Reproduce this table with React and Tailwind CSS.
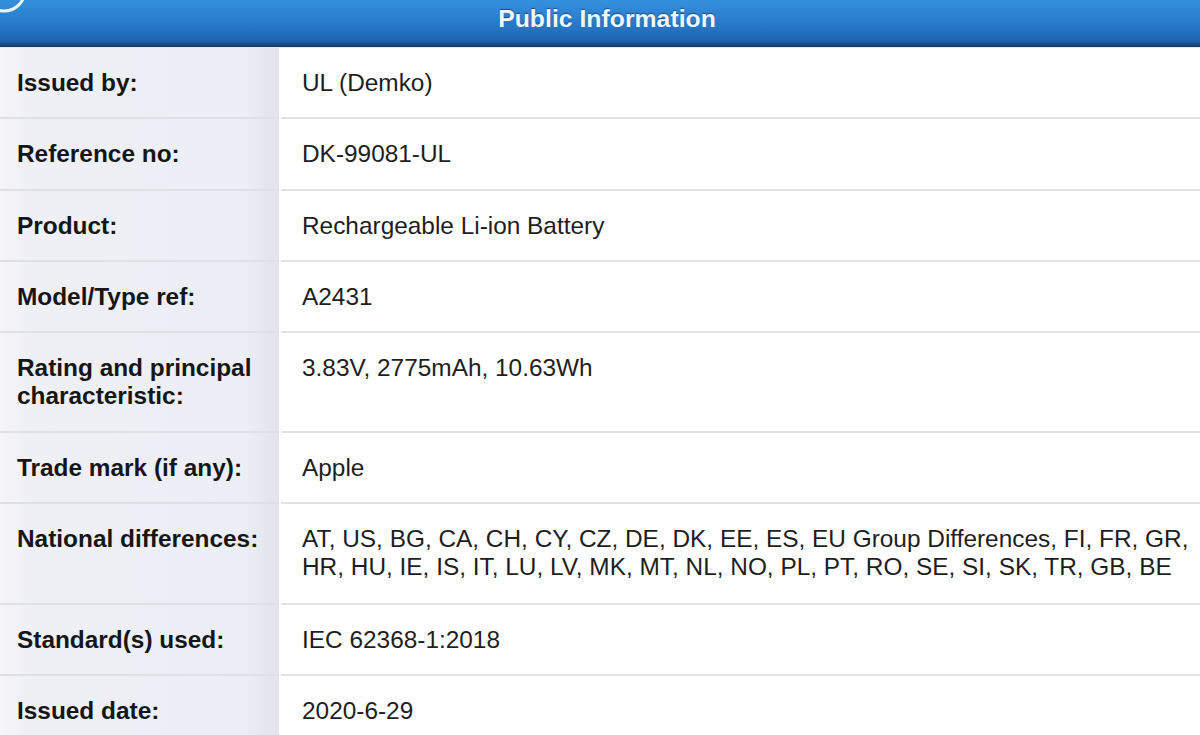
import React from "react";

const rows = [
  { label: "Issued by:", value: "UL (Demko)", h: "h-[71px]" },
  { label: "Reference no:", value: "DK-99081-UL", h: "h-[72px]" },
  { label: "Product:", value: "Rechargeable Li-ion Battery", h: "h-[71px]" },
  { label: "Model/Type ref:", value: "A2431", h: "h-[71px]" },
  { label: "Rating and principal characteristic:", value: "3.83V, 2775mAh, 10.63Wh", h: "h-[100px]" },
  { label: "Trade mark (if any):", value: "Apple", h: "h-[71px]" },
  {
    label: "National differences:",
    value:
      "AT, US, BG, CA, CH, CY, CZ, DE, DK, EE, ES, EU Group Differences, FI, FR, GR, HR, HU, IE, IS, IT, LU, LV, MK, MT, NL, NO, PL, PT, RO, SE, SI, SK, TR, GB, BE",
    h: "h-[101px]",
  },
  { label: "Standard(s) used:", value: "IEC 62368-1:2018", h: "h-[71px]" },
  { label: "Issued date:", value: "2020-6-29", h: "h-[72px]" },
];

export default function App() {
  return (
    <div
      className="w-[1200px] h-[735px] overflow-hidden bg-white relative"
      style={{ fontFamily: '"Liberation Sans", Arial, sans-serif' }}
    >
      <div className="relative h-[47px] bg-[linear-gradient(to_bottom,#3590dc_0%,#2a7ccd_45%,#1f66b2_85%,#1a4f8c_93%,#133763_100%)] flex items-center justify-center pb-[9px] pl-[14px]">
        <svg className="absolute left-0 top-0" width="44" height="22" viewBox="0 0 44 22">
          <circle cx="4" cy="-10" r="21" fill="none" stroke="#e9f3fb" strokeWidth="3" />
        </svg>
        <span className="text-[24.8px] leading-[28px] font-bold text-[#eef6ff] [text-shadow:0_-1px_1px_rgba(10,40,90,0.6)]">
          Public Information
        </span>
      </div>
      <div className="h-px bg-[#dfeaf6]" />
      <div className="flex flex-col">
        {rows.map((r, i) => (
          <div key={i} className={`flex ${r.h}`}>
            <div className="w-[279px] shrink-0 border-b-2 border-[#dfe0e6] bg-[linear-gradient(to_right,#f6f5f8_0%,#eff0f6_10%,#eceef5_88%,#e1e3ed_100%)] pl-[17px] pr-[10px] pt-[21px]">
              <div className="text-[24.4px] leading-[28px] font-bold text-[#161616]">{r.label}</div>
            </div>
            <div className="w-[2px] shrink-0 bg-white" />
            <div className="flex-1 border-b-2 border-[#e1e1e1] bg-white pl-[21px] pr-[6px] pt-[21px]">
              <div className="text-[24.4px] leading-[28px] text-[#1e1e1e]">{r.value}</div>
            </div>
          </div>
        ))}
      </div>
    </div>
  );
}
